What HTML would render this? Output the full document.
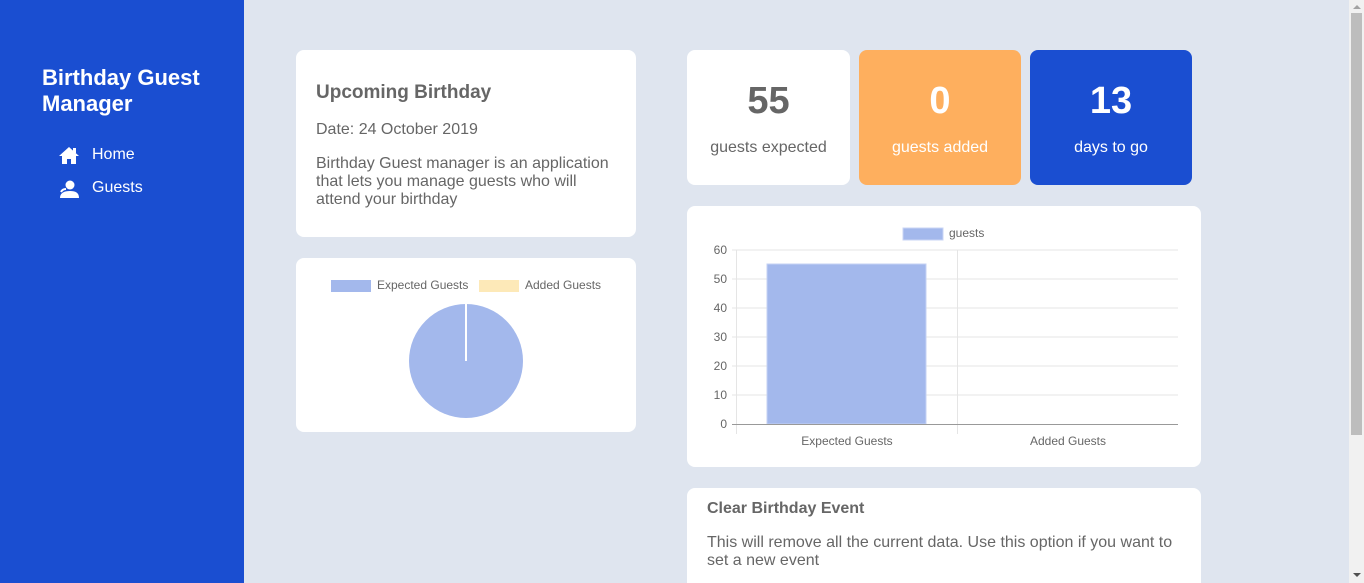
<!DOCTYPE html>
<html><head><style>
*{margin:0;padding:0;box-sizing:border-box}
html,body{width:1364px;height:583px;overflow:hidden}
body{background:#dfe5ef;font-family:"Liberation Sans",sans-serif;position:relative;color:#666}
.side{position:absolute;left:0;top:0;width:244px;height:583px;background:#1a4ed1;color:#fff}
.side h1{position:absolute;left:42px;top:65px;font-size:22px;line-height:26px;font-weight:bold}
.nav{position:absolute;left:59px;font-size:16px}
.nav svg{position:absolute;left:0;top:0}
.nav span{position:absolute;left:33px;top:0;white-space:nowrap}
.card{position:absolute;background:#fff;border-radius:8px;overflow:hidden}
.stat{text-align:center}
.stat b{display:block;font-size:38px;margin-top:31px;line-height:40px}
.stat span{display:block;font-size:16px;margin-top:18px}
.sb{position:absolute;left:1349px;top:0;width:15px;height:583px;background:#f1f1f1}
</style></head><body>
<div class="side">
<h1>Birthday Guest<br>Manager</h1>
<div class="nav" style="top:146px"><svg width="20" height="18" viewBox="0 0 20 18"><path d="M10 1L0 10h3v8h5v-5h4v5h5v-8h3z" fill="#fff"/><rect x="14" y="2" width="3" height="5" fill="#fff"/></svg><span>Home</span></div>
<div class="nav" style="top:179px"><svg width="20" height="20" viewBox="0 0 20 20"><circle cx="11" cy="6" r="4.5" fill="#fff"/><path d="M1 19c0-5 4-7 10-7s9 2 9 7z" fill="#fff"/><path d="M2 13c1-2 3-3 5-3" stroke="#fff" stroke-width="2" fill="none"/></svg><span>Guests</span></div>
</div>

<div class="card" style="left:296px;top:50px;width:340px;height:187px">
<div style="position:absolute;left:20px;top:32px;font-size:19px;font-weight:bold;color:#666">Upcoming Birthday</div>
<div style="position:absolute;left:20px;top:71px;font-size:16px">Date: 24 October 2019</div>
<div style="position:absolute;left:20px;top:105px;width:305px;font-size:16px;line-height:18px">Birthday Guest manager is an application that lets you manage guests who will attend your birthday</div>
</div>

<div class="card" style="left:296px;top:258px;width:340px;height:174px">
<div style="position:absolute;left:35px;top:22px;width:40px;height:12px;background:#a3b8ec"></div>
<div style="position:absolute;left:81px;top:20px;font-size:12px">Expected Guests</div>
<div style="position:absolute;left:183px;top:22px;width:40px;height:12px;background:#fde9b8"></div>
<div style="position:absolute;left:229px;top:20px;font-size:12px">Added Guests</div>
<svg style="position:absolute;left:112px;top:45px" width="116" height="116"><circle cx="58" cy="58" r="57" fill="#a3b8ec"/><line x1="58" y1="1" x2="58" y2="58" stroke="#fff" stroke-width="2"/></svg>
</div>

<div class="card stat" style="left:687px;top:50px;width:163px;height:135px;color:#666"><b>55</b><span>guests expected</span></div>
<div class="card stat" style="left:859px;top:50px;width:162px;height:135px;background:#feaf5e;color:#fff"><b>0</b><span>guests added</span></div>
<div class="card stat" style="left:1030px;top:50px;width:162px;height:135px;background:#1a4ed1;color:#fff"><b>13</b><span>days to go</span></div>

<div class="card" style="left:687px;top:206px;width:514px;height:261px">
<svg width="514" height="261" style="position:absolute;left:0;top:0;font-family:'Liberation Sans',sans-serif;font-size:12px" fill="#666">
<rect x="216" y="22" width="40" height="12" fill="#a3b8ec" stroke="#c9d5f4"/>
<text x="262" y="31">guests</text>
<g stroke="#e5e5e5">
<line x1="45" y1="44" x2="491" y2="44"/><line x1="45" y1="73" x2="491" y2="73"/><line x1="45" y1="102" x2="491" y2="102"/><line x1="45" y1="131" x2="491" y2="131"/><line x1="45" y1="160" x2="491" y2="160"/><line x1="45" y1="189" x2="491" y2="189"/>
<line x1="49.5" y1="44" x2="49.5" y2="228"/><line x1="270.5" y1="44" x2="270.5" y2="228"/>
</g>
<rect x="80" y="58" width="159" height="160" fill="#a3b8ec" stroke="#c4d2f3"/>
<line x1="45" y1="218.5" x2="491" y2="218.5" stroke="#999"/>
<g text-anchor="end"><text x="40" y="48">60</text><text x="40" y="77">50</text><text x="40" y="106">40</text><text x="40" y="135">30</text><text x="40" y="164">20</text><text x="40" y="193">10</text><text x="40" y="222">0</text></g>
<g text-anchor="middle"><text x="160" y="239">Expected Guests</text><text x="381" y="239">Added Guests</text></g>
</svg>
</div>

<div class="card" style="left:687px;top:488px;width:514px;height:110px">
<div style="position:absolute;left:20px;top:12px;font-size:16px;font-weight:bold">Clear Birthday Event</div>
<div style="position:absolute;left:20px;top:46px;width:480px;font-size:16px;line-height:18px">This will remove all the current data. Use this option if you want to set a new event</div>
</div>

<div class="sb"><div style="position:absolute;left:2px;top:13px;width:11px;height:422px;background:#bdbdbd"></div>
<div style="position:absolute;left:4px;top:5px;border:4px solid transparent;border-bottom:4px solid #a3a3a3;border-top:0"></div>
<div style="position:absolute;left:4px;top:573px;border:4px solid transparent;border-top:4px solid #505050;border-bottom:0"></div></div>
</body></html>
